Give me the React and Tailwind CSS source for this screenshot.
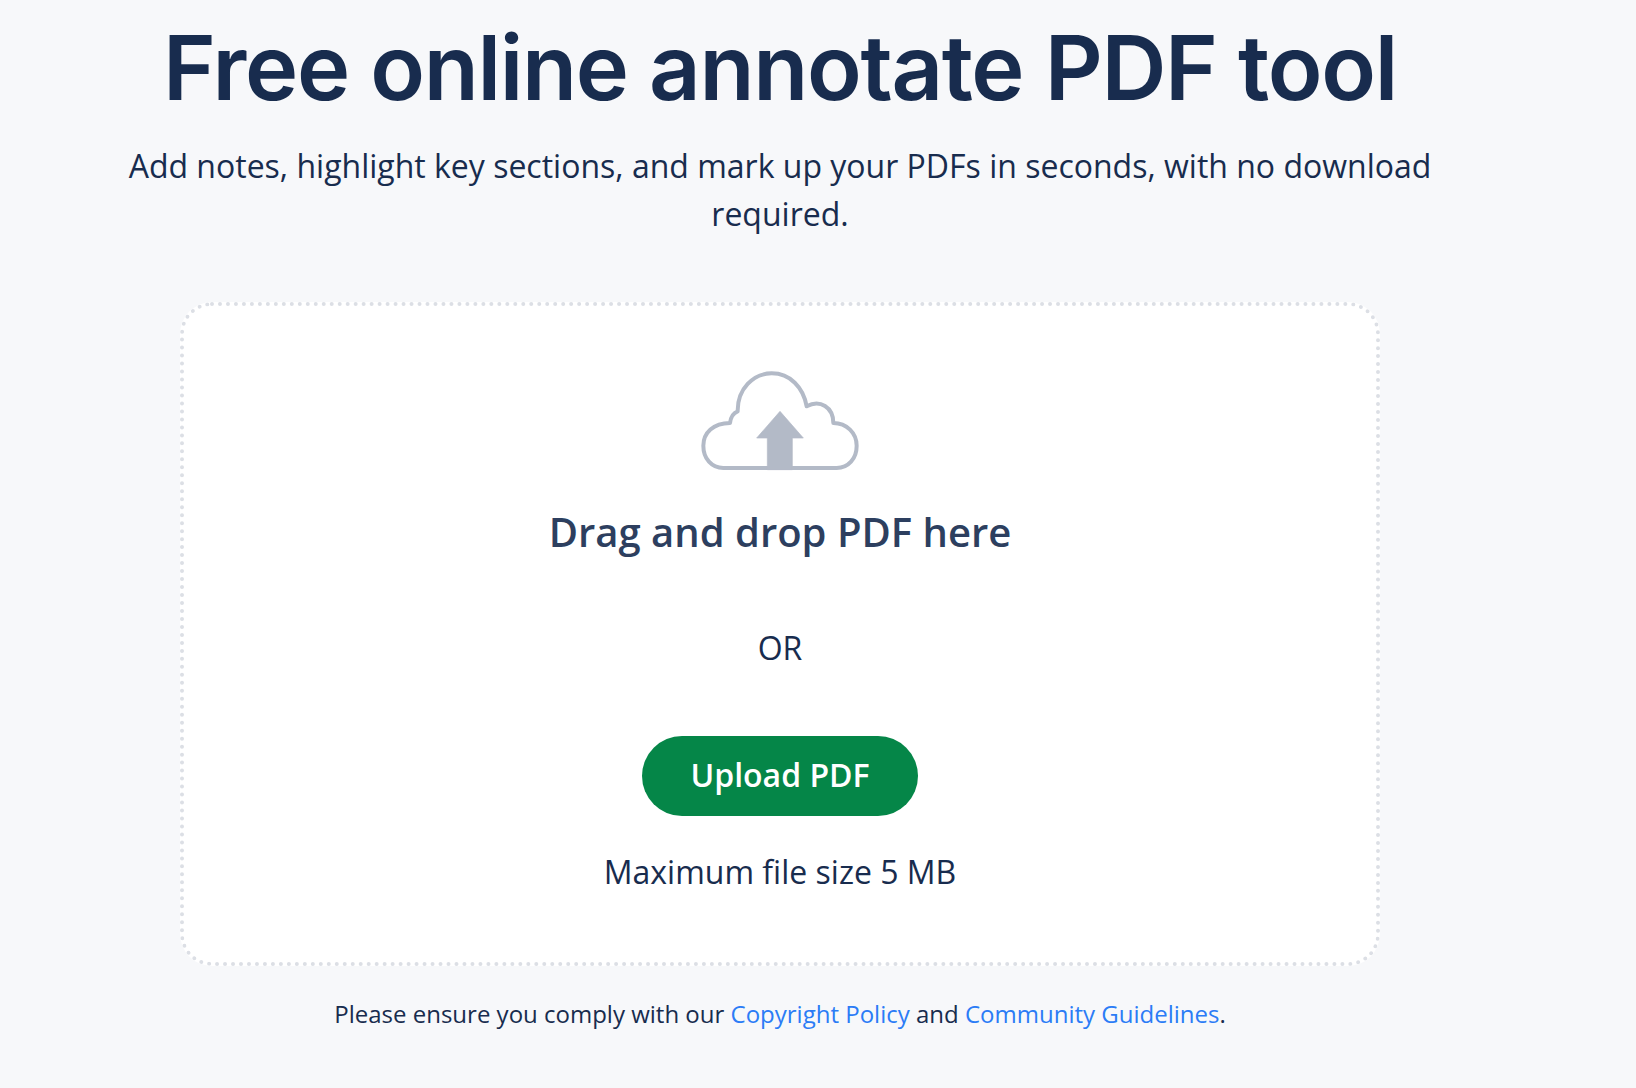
import React from 'react';

const CloudIcon = () => (
    <svg width="160" height="102" viewBox="120 60 480 306" fill="none" className="block">
        <path
            d="M190 357 C155 357 130 329 130 290 C130 252 160 222 210 222 C212 205 220 192 233 187 C232 120 280 73 335 73 C390 73 430 115 440 172 C480 150 520 175 520 222 C560 222 590 252 590 290 C590 329 565 357 530 357 Z"
            stroke="#b3bac7"
            strokeWidth="12"
            strokeLinejoin="round"
        />
        <path d="M360 187 L430 267 L397 267 L397 362 L322 362 L322 267 L290 267 Z" fill="#b3bac7" stroke="#b3bac7" strokeWidth="2" strokeLinejoin="round" />
    </svg>
);

const App = () => {
    return (
        <div className="h-[1088px] overflow-hidden bg-[#f7f8fa] font-['Open_Sans',sans-serif] text-[#182c4e]">
            <div className="w-[1560px] flex flex-col items-center">
                <h1 className="mt-[14px] text-[90px] leading-[108px] font-semibold font-['Inter',sans-serif] tracking-[-1.3px] text-[#182c4e] whitespace-nowrap">
                    Free online annotate PDF tool
                </h1>
                <p className="mt-[20px] w-[1320px] text-center text-[32px] leading-[48px]">
                    Add notes, highlight key sections, and mark up your PDFs in seconds, with no download required.
                </p>

                {/* Upload box */}
                <div className="mt-[64px] w-[1200px] h-[664px] bg-white rounded-[32px] border-4 border-dotted border-[#dcdfe5] flex flex-col items-center">
                    <div className="mt-[63px]">
                        <CloudIcon />
                    </div>
                    <h2 className="mt-[35px] text-[40px] leading-[52px] font-semibold text-[#2d3f5f]">Drag and drop PDF here</h2>
                    <div className="mt-[70px] text-[32px] leading-[40px]">OR</div>
                    <button className="mt-[68px] w-[276px] h-[80px] rounded-full bg-[#058648] text-white text-[32px] leading-[44px] font-semibold pb-[2px]">
                        Upload PDF
                    </button>
                    <div className="mt-[32px] text-[32px] leading-[48px]">Maximum file size 5 MB</div>
                </div>

                <p className="mt-[30px] text-[24px] leading-[36px]">
                    Please ensure you comply with our <a href="#" className="text-[#2b7cf6]">Copyright Policy</a> and <a href="#" className="text-[#2b7cf6]">Community Guidelines</a>.
                </p>
            </div>
        </div>
    );
};

export default App;
